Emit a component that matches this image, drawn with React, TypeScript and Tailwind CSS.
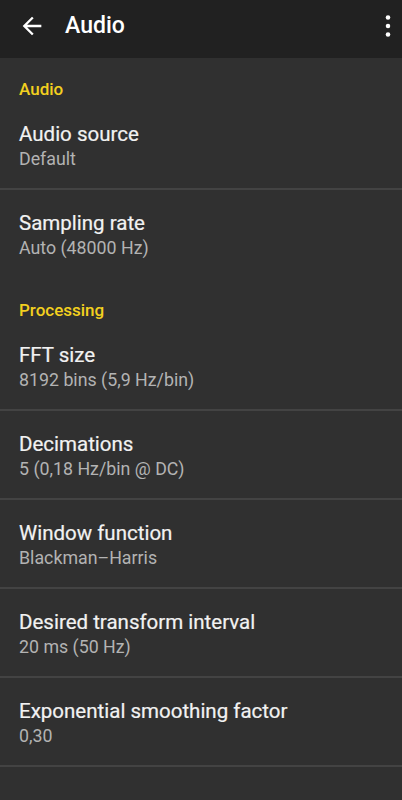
const sections = [
  {
    title: 'Audio',
    items: [
      { title: 'Audio source', summary: 'Default' },
      { title: 'Sampling rate', summary: 'Auto (48000 Hz)' },
    ],
  },
  {
    title: 'Processing',
    items: [
      { title: 'FFT size', summary: '8192 bins (5,9 Hz/bin)' },
      { title: 'Decimations', summary: '5 (0,18 Hz/bin @ DC)' },
      { title: 'Window function', summary: 'Blackman\u2013Harris' },
      { title: 'Desired transform interval', summary: '20 ms (50 Hz)' },
      { title: 'Exponential smoothing factor', summary: '0,30' },
    ],
  },
]

export default function App() {
  return (
    <div className="min-h-[800px] bg-[#303030] font-['Roboto',sans-serif]">
      <header className="h-[58px] bg-[#212121] flex items-center pl-[18px] pr-[1px] pb-[7px]">
        <button type="button" aria-label="Back" className="text-white">
          <BackIcon />
        </button>
        <h1 className="ml-[19px] text-[23px] font-medium text-white leading-none">Audio</h1>
        <button type="button" aria-label="More options" className="ml-auto text-white">
          <MoreIcon />
        </button>
      </header>

      <main>
        {sections.map((section) => (
          <section key={section.title}>
            <div className="h-[43px] pl-[19px] pt-[21px] text-[17px] leading-[20px] font-medium text-[#f3d01f]">
              {section.title}
            </div>
            {section.items.map((item, i) => (
              <div
                key={item.title}
                className={
                  i === section.items.length - 1 && section.title === 'Audio'
                    ? 'h-[89px] pl-[19px] pt-[21px]'
                    : 'h-[89px] pl-[19px] pt-[21px] border-b-2 border-[#434343]'
                }
              >
                <div className="text-[20.5px] leading-[24px] text-[#f2f2f2] [-webkit-text-stroke:0.2px_#f2f2f2]">
                  {item.title}
                </div>
                <div className="mt-[3px] text-[17.8px] leading-[20px] text-[#b3b3b3]">{item.summary}</div>
              </div>
            ))}
          </section>
        ))}
      </main>
    </div>
  )
}

function BackIcon() {
  return (
    <svg width="28" height="28" viewBox="0 0 24 24" fill="currentColor" aria-hidden>
      <path d="M20 11H7.83l5.59-5.59L12 4l-8 8 8 8 1.41-1.41L7.83 13H20v-2z" />
    </svg>
  )
}

function MoreIcon() {
  return (
    <svg width="26" height="26" viewBox="0 0 24 24" fill="currentColor" aria-hidden>
      <circle cx="12" cy="4.2" r="2.1" />
      <circle cx="12" cy="12" r="2.1" />
      <circle cx="12" cy="19.8" r="2.1" />
    </svg>
  )
}
